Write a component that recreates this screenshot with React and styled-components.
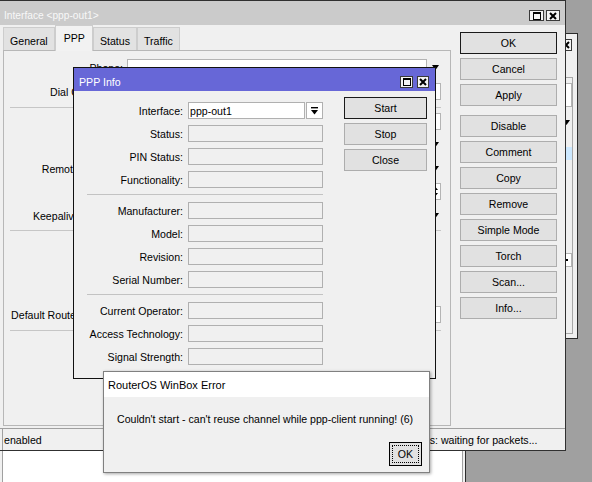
import React from 'react';
import styled, { createGlobalStyle } from 'styled-components';

const GlobalStyle = createGlobalStyle`
  html, body { margin: 0; padding: 0; background: #a0a0a0; overflow: hidden; }
  body { font-family: "Liberation Sans", Arial, sans-serif; font-size: 10.6px; color: #000; }
  * { box-sizing: border-box; }
`;

const Desktop = styled.div`
  position: relative;
  width: 592px;
  height: 482px;
  overflow: hidden;
  background: #a0a0a0;
`;

const Win = styled.div`
  position: absolute;
  left: ${p => p.$left}px;
  top: ${p => p.$top}px;
  width: ${p => p.$w}px;
  height: ${p => p.$h}px;
  z-index: ${p => p.$z};
  border: 1px solid ${p => p.$border || '#2b2b2b'};
  background: #f0f0f0;
  display: flex;
  flex-direction: column;
  overflow: hidden;
  ${p => p.$shadow ? 'box-shadow: 1px 1px 3px rgba(0,0,0,0.35);' : ''}
`;

const TitleBar = styled.div`
  flex: none;
  height: ${p => p.$h}px;
  padding: ${p => p.$pt || 0}px ${p => p.$pr}px 0 ${p => p.$pl}px;
  background: ${p => p.$bg};
  color: ${p => p.$fg || '#000'};
  font-size: ${p => p.$fs || 10.6}px;
  display: flex;
  align-items: center;
  justify-content: space-between;
  white-space: nowrap;
`;

const TitleButtons = styled.div`
  display: flex;
  gap: ${p => p.$gap}px;
`;

const CapBtn = styled.div`
  width: ${p => p.$w}px;
  height: ${p => p.$h || 12}px;
  border: 1px solid #3a3a3a;
  background: #f4f4f4;
  display: flex;
  align-items: center;
  justify-content: center;
`;

const MaxIcon = () => (
  <svg width="8" height="8" viewBox="0 0 8 8">
    <rect x="0.5" y="0.5" width="7" height="7" fill="none" stroke="#000" strokeWidth="1" />
    <rect x="0" y="0" width="8" height="2" fill="#000" />
  </svg>
);

const CloseIcon = () => (
  <svg width="8" height="8" viewBox="0 0 8 8">
    <path d="M1 1 L7 7 M7 1 L1 7" stroke="#000" strokeWidth="2" />
  </svg>
);

const DownTri = () => (
  <svg width="7" height="5" viewBox="0 0 7 5">
    <polygon points="0,0 7,0 3.5,5" fill="#000" />
  </svg>
);

const BarDownIcon = () => (
  <svg width="7" height="8" viewBox="0 0 7 8">
    <rect x="0" y="0" width="7" height="1.4" fill="#000" />
    <polygon points="0,3 7,3 3.5,7.5" fill="#000" />
  </svg>
);

const SpinIcon = () => (
  <svg width="5" height="11" viewBox="0 0 5 11">
    <polygon points="0,4 5,4 2.5,1" fill="#000" />
    <polygon points="0,7 5,7 2.5,10" fill="#000" />
  </svg>
);

/* ---------- buttons ---------- */
const Btn = styled.button`
  width: ${p => p.$w}px;
  height: 22px;
  flex: none;
  margin: ${p => p.$mt || 0}px 0 0 0;
  padding: 0;
  border: 1px solid ${p => (p.$default ? '#1a1a1a' : '#adadad')};
  background: #e1e1e1;
  font: inherit;
  color: #000;
  display: flex;
  align-items: center;
  justify-content: center;
`;

/* ---------- main window ---------- */
const MainBody = styled.div`
  flex: 1;
  display: flex;
  min-height: 0;
`;

const LeftCol = styled.div`
  width: 451px;
  flex: none;
  padding-left: 3px;
  display: flex;
  flex-direction: column;
`;

const TabStrip = styled.div`
  height: 25px;
  flex: none;
  display: flex;
  align-items: flex-end;
  position: relative;
  z-index: 1;
`;

const Tab = styled.div`
  height: ${p => (p.$active ? 26 : 23)}px;
  margin-bottom: ${p => (p.$active ? -1 : 0)}px;
  padding: ${p => (p.$active ? '0 7px 1px 8px' : '3px 6px 0 6px')};
  border: 1px solid #cdcdcd;
  border-bottom: none;
  background: ${p => (p.$active ? '#f2f2f2' : '#e2e2e2')};
  display: flex;
  align-items: center;
  white-space: nowrap;
`;

const Panel = styled.div`
  height: 376px;
  flex: none;
  border: 1px solid #b7b7b7;
  background: #f0f0f0;
  display: flex;
  flex-direction: column;
  padding-right: 9px;
`;

const PanelRow = styled.div`
  display: flex;
  align-items: center;
  height: 17px;
  flex: none;
  margin-top: ${p => p.$mt}px;
`;

const PanelLabel = styled.div`
  width: 119px;
  flex: none;
  text-align: right;
  white-space: nowrap;
  display: flex;
  justify-content: flex-end;
`;

const PanelField = styled.div`
  flex: 1;
  height: 17px;
  margin-left: 4px;
  background: #fff;
  border: 1px solid #b4b4b4;
  display: flex;
  align-items: center;
  justify-content: flex-end;
  padding-right: 2px;
`;

const TriSlot = styled.div`
  width: 14px;
  flex: none;
  display: flex;
  justify-content: flex-end;
  padding-right: 2px;
`;

const PanelSep = styled.div`
  height: 0;
  flex: none;
  border-top: 1px solid #c6c6c6;
  margin: ${p => p.$mt}px 0 0 6px;
`;

const RightCol = styled.div`
  margin-left: 9px;
  padding-top: 7px;
  display: flex;
  flex-direction: column;
  gap: 4px;
`;

const StatusBar = styled.div`
  height: 22px;
  flex: none;
  border-top: 1px solid #a0a0a0;
  padding-left: 2px;
  display: flex;
`;

const StatusCell = styled.div`
  width: ${p => (p.$w ? `${p.$w}px` : 'auto')};
  flex: ${p => (p.$w ? 'none' : '1')};
  border-left: 1px solid #a0a0a0;
  padding-left: 1px;
  display: flex;
  align-items: center;
  white-space: nowrap;
`;

/* ---------- PPP info window ---------- */
const InfoBody = styled.div`
  flex: 1;
  display: flex;
`;

const InfoForm = styled.div`
  width: 249px;
  flex: none;
  padding-top: 11px;
  display: flex;
  flex-direction: column;
  gap: 6px;
`;

const InfoRow = styled.div`
  display: flex;
  align-items: center;
  height: 17px;
  flex: none;
`;

const InfoLabel = styled.div`
  width: 109px;
  flex: none;
  text-align: right;
  white-space: nowrap;
`;

const InfoField = styled.div`
  width: ${p => p.$w}px;
  height: 17px;
  flex: none;
  margin-left: ${p => p.$ml}px;
  border: 1px solid #b0b0b0;
  background: ${p => (p.$white ? '#fff' : '#f0f0f0')};
  display: flex;
  align-items: center;
  justify-content: ${p => (p.$center ? 'center' : 'flex-start')};
  padding-left: ${p => (p.$center ? 0 : 1)}px;
  white-space: nowrap;
`;

const InfoSep = styled.div`
  height: 0;
  flex: none;
  border-top: 1px solid #c3c3c3;
  margin: 0 0 1px 13px;
`;

const InfoBtnCol = styled.div`
  margin-left: 21px;
  padding-top: 6px;
  display: flex;
  flex-direction: column;
  gap: 4px;
`;

/* ---------- error dialog ---------- */
const DialogTitle = styled.div`
  height: 25px;
  flex: none;
  background: #fff;
  padding-left: 4px;
  display: flex;
  align-items: center;
  font-size: 11px;
  white-space: nowrap;
`;

const DialogBody = styled.div`
  flex: 1;
  display: flex;
  flex-direction: column;
  padding: 16px 7px 6px 13px;
`;

const Message = styled.div`
  line-height: 13px;
  white-space: nowrap;
`;

const DialogFooter = styled.div`
  margin-top: auto;
  display: flex;
  justify-content: flex-end;
`;

const OkButton = styled.button`
  width: 33px;
  height: 24px;
  padding: 2px;
  border: 1px solid #000;
  background: #e1e1e1;
  font: inherit;
  color: #000;
  display: flex;
`;

const FocusRing = styled.span`
  flex: 1;
  border: 1px dotted #000;
  display: flex;
  align-items: center;
  justify-content: center;
`;

/* ---------- background windows ---------- */
const BackBody = styled.div`
  flex: 1;
  display: flex;
  flex-direction: column;
  padding: ${p => p.$pad};
`;

const BackPanel = styled.div`
  flex: 1;
  border: 1px solid #a8a8a8;
  display: flex;
  flex-direction: column;
`;

const WhiteBox = styled.div`
  height: ${p => p.$h}px;
  flex: none;
  margin-top: ${p => p.$mt}px;
  background: #fff;
  border: 1px solid #b4b4b4;
  display: flex;
  align-items: center;
  justify-content: flex-end;
  padding-right: 3px;
`;

const ArrowRow = styled.div`
  height: 10px;
  flex: none;
  margin-top: ${p => p.$mt}px;
  display: flex;
  align-items: center;
  justify-content: flex-end;
  padding-right: 2px;
`;

const SelectedRow = styled.div`
  height: 13px;
  flex: none;
  margin-top: ${p => p.$mt}px;
  background: #cce8ff;
`;

const WhiteList = styled.div`
  flex: 1;
  background: #fff;
  border: 1px solid #a0a0a0;
`;

const Dot = styled.span`
  width: 2px;
  height: 2px;
  background: #000;
`;

const mainButtons = [
  ['OK', true, 0],
  ['Cancel', false, 0],
  ['Apply', false, 0],
  ['Disable', false, 5],
  ['Comment', false, 0],
  ['Copy', false, 0],
  ['Remove', false, 0],
  ['Simple Mode', false, 0],
  ['Torch', false, 0],
  ['Scan...', false, 0],
  ['Info...', false, 0],
];

const infoGroups = [
  ['Status:', 'PIN Status:', 'Functionality:'],
  ['Manufacturer:', 'Model:', 'Revision:', 'Serial Number:'],
  ['Current Operator:', 'Access Technology:', 'Signal Strength:'],
];

export default function App() {
  return (
    <Desktop>
      <GlobalStyle />

      {/* window behind, right */}
      <Win $left={380} $top={33} $w={198} $h={306} $z={1}>
        <TitleBar $h={22} $bg="#f0f0f0" $pl={5} $pr={5}>
          <span />
          <CapBtn $w={13}><CloseIcon /></CapBtn>
        </TitleBar>
        <BackBody $pad="21px 4px 4px 0">
          <BackPanel>
            <WhiteBox $h={24} $mt={5} />
            <ArrowRow $mt={10}><DownTri /></ArrowRow>
            <SelectedRow $mt={20} />
            <WhiteBox $h={14} $mt={93}><Dot /></WhiteBox>
          </BackPanel>
        </BackBody>
      </Win>

      {/* window behind, bottom */}
      <Win $left={-3} $top={430} $w={469} $h={80} $z={1}>
        <BackBody $pad="10px 2px 0 4px">
          <WhiteList />
        </BackBody>
      </Win>

      {/* main interface window */}
      <Win $left={-1} $top={0} $w={567} $h={451} $z={2} $border="#303030">
        <TitleBar $h={24} $pt={5} $pl={4} $pr={5} $bg="#cbcbcb" $fg="#f8f8f8" $fs={10.2}>
          <span>Interface &lt;ppp-out1&gt;</span>
          <TitleButtons $gap={2}>
            <CapBtn $w={15} $h={11}><MaxIcon /></CapBtn>
            <CapBtn $w={14} $h={11}><CloseIcon /></CapBtn>
          </TitleButtons>
        </TitleBar>
        <MainBody>
          <LeftCol>
            <TabStrip>
              <Tab>General</Tab>
              <Tab $active>PPP</Tab>
              <Tab>Status</Tab>
              <Tab>Traffic</Tab>
            </TabStrip>
            <Panel>
              <PanelRow $mt={8}>
                <PanelLabel>Phone:</PanelLabel>
                <PanelField />
                <TriSlot><DownTri /></TriSlot>
              </PanelRow>
              <PanelRow $mt={7}>
                <PanelLabel>Dial Command:</PanelLabel>
                <PanelField />
              </PanelRow>
              <PanelSep $mt={7} />
              <PanelRow $mt={5}>
                <PanelLabel>User:</PanelLabel>
                <PanelField />
              </PanelRow>
              <PanelRow $mt={6}>
                <PanelLabel>Profile:</PanelLabel>
                <PanelField />
                <TriSlot><DownTri /></TriSlot>
              </PanelRow>
              <PanelRow $mt={7}>
                <PanelLabel>Remote Address:</PanelLabel>
                <PanelField />
                <TriSlot><DownTri /></TriSlot>
              </PanelRow>
              <PanelRow $mt={6}>
                <PanelLabel>MTU:</PanelLabel>
                <PanelField><SpinIcon /></PanelField>
              </PanelRow>
              <PanelRow $mt={7}>
                <PanelLabel>Keepalive Timeout:</PanelLabel>
                <PanelField />
                <TriSlot><DownTri /></TriSlot>
              </PanelRow>
              <PanelSep $mt={6} />
              <PanelRow $mt={75}>
                <PanelLabel>Default Route Distance:</PanelLabel>
                <PanelField />
              </PanelRow>
              <PanelSep $mt={7} />
            </Panel>
          </LeftCol>
          <RightCol>
            {mainButtons.map(([label, def, mt]) => (
              <Btn key={label} $w={97} $default={def} $mt={mt}>{label}</Btn>
            ))}
          </RightCol>
        </MainBody>
        <StatusBar>
          <StatusCell $w={130}>enabled</StatusCell>
          <StatusCell $w={130} />
          <StatusCell $w={141} />
          <StatusCell>Status: waiting for packets...</StatusCell>
        </StatusBar>
      </Win>

      {/* PPP info window */}
      <Win $left={73} $top={67} $w={363} $h={312} $z={3} $border="#111">
        <TitleBar $h={23} $pt={4} $pl={5} $pr={6} $bg="#6767d7" $fg="#fff">
          <span>PPP Info</span>
          <TitleButtons $gap={4}>
            <CapBtn $w={13}><MaxIcon /></CapBtn>
            <CapBtn $w={12}><CloseIcon /></CapBtn>
          </TitleButtons>
        </TitleBar>
        <InfoBody>
          <InfoForm>
            <InfoRow>
              <InfoLabel>Interface:</InfoLabel>
              <InfoField $w={117} $ml={5} $white>ppp-out1</InfoField>
              <InfoField $w={17} $ml={1} $white $center><BarDownIcon /></InfoField>
            </InfoRow>
            {infoGroups.map((group, gi) => (
              <React.Fragment key={gi}>
                {gi > 0 && <InfoSep />}
                {group.map(label => (
                  <InfoRow key={label}>
                    <InfoLabel>{label}</InfoLabel>
                    <InfoField $w={135} $ml={5} />
                  </InfoRow>
                ))}
              </React.Fragment>
            ))}
          </InfoForm>
          <InfoBtnCol>
            <Btn $w={83} $default>Start</Btn>
            <Btn $w={83}>Stop</Btn>
            <Btn $w={83}>Close</Btn>
          </InfoBtnCol>
        </InfoBody>
      </Win>

      {/* error dialog */}
      <Win $left={103} $top={371} $w={327} $h={102} $z={4} $border="#808080" $shadow>
        <DialogTitle>RouterOS WinBox Error</DialogTitle>
        <DialogBody>
          <Message>Couldn't start - can't reuse channel while ppp-client running! (6)</Message>
          <DialogFooter>
            <OkButton><FocusRing>OK</FocusRing></OkButton>
          </DialogFooter>
        </DialogBody>
      </Win>
    </Desktop>
  );
}
